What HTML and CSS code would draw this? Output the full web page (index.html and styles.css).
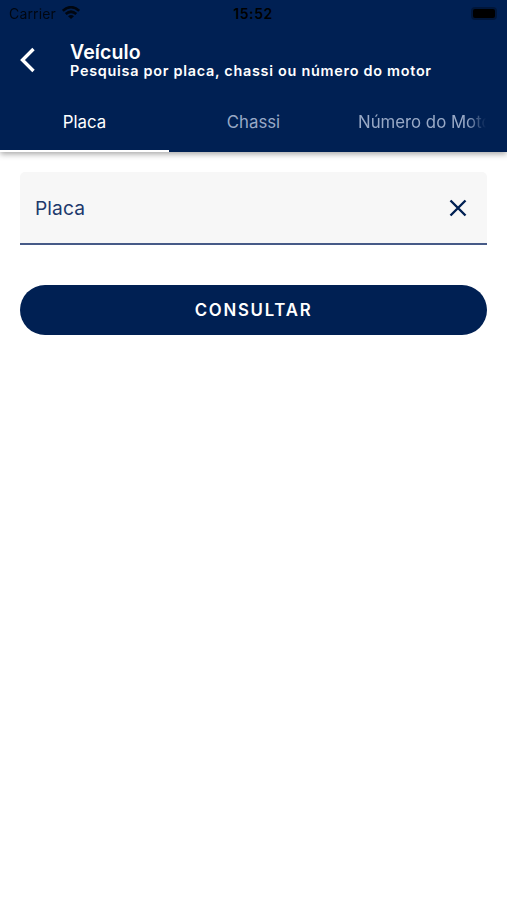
FILE: index.html
```html
<!DOCTYPE html>
<html lang="pt-BR">
<head>
<meta charset="utf-8">
<title>Veículo</title>
<link rel="stylesheet" href="styles.css">
</head>
<body>
<header class="header">
  <div class="status">
    <div class="carrier"><span>Carrier</span>
      <svg class="wifi" width="18" height="13" viewBox="0 0 18 13"><g fill="none" stroke="#000" stroke-width="2.7"><path d="M.8 4.8Q9-2.4 17.2 4.8"/><path d="M3.7 8Q9 3.5 14.3 8"/></g><path d="M6 10.2Q9 7.7 12 10.2L9 13z"/></svg>
    </div>
    <time class="clock">15:52</time>
    <div class="battery"><span class="charge"></span></div>
  </div>
  <div class="appbar">
    <svg class="back" width="16" height="26" viewBox="0 0 16 26"><path d="M14.5 2 3.5 13l11 11" fill="none" stroke="#fff" stroke-width="3.4"/></svg>
    <div class="titles">
      <h1>Veículo</h1>
      <p>Pesquisa por placa, chassi ou número do motor</p>
    </div>
  </div>
  <nav class="tabs">
    <div class="tab active">Placa</div>
    <div class="tab">Chassi</div>
    <div class="tab clipped"><span>Número do Motor</span></div>
  </nav>
</header>
<main class="content">
  <div class="field">
    <label>Placa</label>
    <svg width="18" height="18" viewBox="0 0 18 18"><path d="m1.5 1.5 15 15m0-15-15 15" fill="none" stroke="#002053" stroke-width="2.4"/></svg>
  </div>
  <button class="submit">CONSULTAR</button>
</main>
</body>
</html>
```
FILE: styles.css
```css
* { box-sizing: border-box; }
body { margin: 0; height: 900px; background: #fff; font-family: Inter, Roboto, sans-serif; overflow: hidden; }
.header { height: 152px; background: #002053; color: #fff; box-shadow: 0 2px 6px rgba(0,0,0,.36); }
.status { height: 27px; display: grid; grid-template-columns: 1fr auto 1fr; align-items: center; padding: 0 10px 0 9px; color: #000; }
.carrier { display: flex; align-items: center; gap: 6px; font-size: 14px; letter-spacing: .15px; opacity: .8; }
.wifi { margin-top: -2px; }
.clock { font-size: 14px; font-weight: 600; letter-spacing: .6px; }
.battery { justify-self: end; width: 26px; height: 13px; padding: 2px; border-radius: 4px; background: rgba(0,0,0,.3); }
.charge { display: block; height: 9px; border-radius: 2px; background: #000; }
.appbar { height: 62px; display: flex; padding: 13px 20px 0 19px; }
.back { margin-top: 7px; }
.titles { margin-left: 35px; padding-top: 1px; white-space: nowrap; }
h1 { margin: 0; font-size: 19.5px; line-height: 22px; font-weight: 600; letter-spacing: .1px; }
p { margin: 0; font-size: 14.4px; line-height: 16px; font-weight: 600; letter-spacing: .73px; }
.tabs { height: 63px; display: grid; grid-template-columns: repeat(3, 1fr); }
.tab { min-width: 0; height: 63px; padding: 0 20px; display: flex; justify-content: center; font-size: 16.8px; line-height: 66px; color: #98a9c6; white-space: nowrap; }
.active { color: #fff; border-bottom: 2px solid #fff; }
.clipped span { flex: 1; min-width: 0; overflow: hidden; -webkit-mask-image: linear-gradient(to right, #000 calc(100% - 20px), transparent calc(100% - 1px)); mask-image: linear-gradient(to right, #000 calc(100% - 20px), transparent calc(100% - 1px)); }
.content { padding: 20px 20px; }
.field { height: 73px; display: flex; align-items: center; justify-content: space-between; padding: 0 20px 0 15px; background: #f7f7f7; border-bottom: 2px solid #465a87; border-radius: 5px 5px 0 0; color: #20396c; font-size: 19.2px; letter-spacing: .1px; }
.submit { display: block; width: 100%; height: 50px; margin-top: 40px; border: 0; padding: 0; border-radius: 25px; background: #002053; color: #fff; font: 600 16.8px Inter, Roboto, sans-serif; letter-spacing: 1.75px; }
```
